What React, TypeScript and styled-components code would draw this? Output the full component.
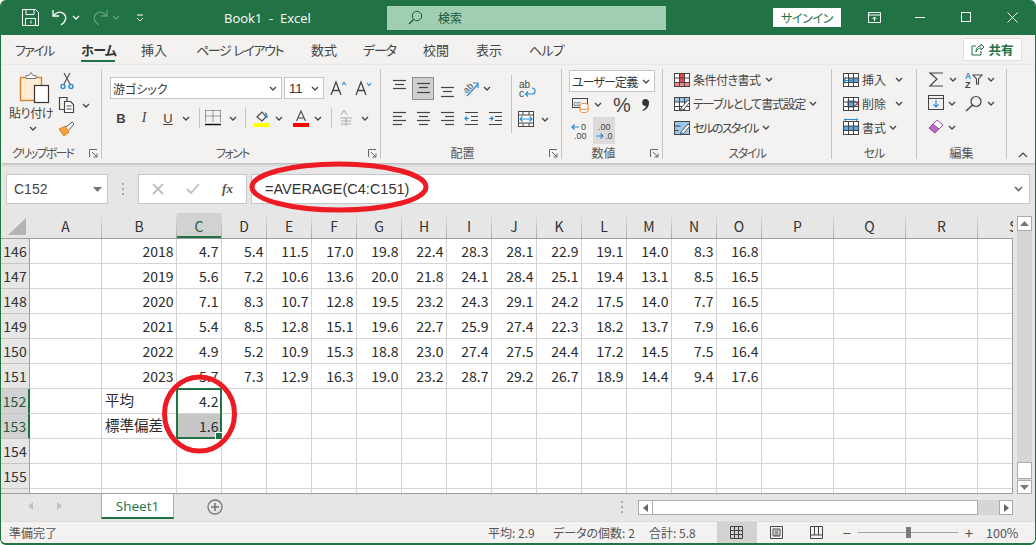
import { ReactNode } from "react";
import styled, { createGlobalStyle } from "styled-components";

const GREEN = "#217346";
const INK = "#444";
const BLUE = "#2a8dd4";
const COLS = "29px 72px 75px repeat(13, 45px) 72px 72px 72px 72px";

const years = [
  ["2018", "4.7", "5.4", "11.5", "17.0", "19.8", "22.4", "28.3", "28.1", "22.9", "19.1", "14.0", "8.3", "16.8"],
  ["2019", "5.6", "7.2", "10.6", "13.6", "20.0", "21.8", "24.1", "28.4", "25.1", "19.4", "13.1", "8.5", "16.5"],
  ["2020", "7.1", "8.3", "10.7", "12.8", "19.5", "23.2", "24.3", "29.1", "24.2", "17.5", "14.0", "7.7", "16.5"],
  ["2021", "5.4", "8.5", "12.8", "15.1", "19.6", "22.7", "25.9", "27.4", "22.3", "18.2", "13.7", "7.9", "16.6"],
  ["2022", "4.9", "5.2", "10.9", "15.3", "18.8", "23.0", "27.4", "27.5", "24.4", "17.2", "14.5", "7.5", "16.4"],
  ["2023", "5.7", "7.3", "12.9", "16.3", "19.0", "23.2", "28.7", "29.2", "26.7", "18.9", "14.4", "9.4", "17.6"],
];
const colNames = "ABCDEFGHIJKLMNOPQRS".split("");

const Global = createGlobalStyle`
  html, body { margin: 0; padding: 0; background: #fff; }
  * { box-sizing: border-box; }
`;

const Window = styled.div`
  position: relative;
  width: 1036px;
  height: 545px;
  display: flex;
  flex-direction: column;
  overflow: hidden;
  background: #e6e6e6;
  border: solid ${GREEN};
  border-width: 0 1px 2px 1px;
  border-radius: 6px;
  font-family: "Noto Sans CJK JP", "Liberation Sans", sans-serif;
  font-feature-settings: "palt";
  color: ${INK};
`;

/* title bar */
const TitleBar = styled.div`
  height: 35px;
  flex: none;
  margin: 0 -1px;
  background: ${GREEN};
  display: flex;
  align-items: center;
  color: #fff;
  padding-left: 22px;
`;
const QatItem = styled.div<{ $w: number }>`
  width: ${(p) => p.$w}px;
  flex: none;
  display: flex;
  align-items: center;
`;
const BookTitle = styled.div`
  width: 163px;
  flex: none;
  font-size: 13px;
  font-family: "Open Sans", sans-serif;
  white-space: pre;
`;
const SearchBox = styled.div`
  width: 279px;
  height: 24px;
  flex: none;
  background: #a0ceb3;
  color: #17583a;
  font-size: 12px;
  display: flex;
  align-items: center;
  gap: 15px;
  padding-left: 21px;
  margin-right: 107px;
`;
const SignIn = styled.div`
  width: 68px;
  height: 19px;
  flex: none;
  background: #fff;
  color: ${GREEN};
  font-size: 12px;
  letter-spacing: -0.4px;
  display: flex;
  align-items: center;
  justify-content: center;
  margin-right: 10px;
`;
const WinButton = styled.div`
  width: 46px;
  flex: none;
  display: flex;
  justify-content: center;
`;

/* tabs */
const TabRow = styled.div`
  height: 30px;
  flex: none;
  background: #f3f2f1;
  display: flex;
  align-items: center;
  padding: 0 0 1px 14px;
  font-size: 13px;
`;
const Tab = styled.div<{ $w: number; $active?: boolean; $ls?: number }>`
  position: relative;
  width: ${(p) => p.$w}px;
  flex: none;
  white-space: pre;
  letter-spacing: ${(p) => p.$ls ?? 0}px;
  font-weight: ${(p) => (p.$active ? 700 : 400)};
  color: ${(p) => (p.$active ? "#333" : INK)};
  ${(p) =>
    p.$active &&
    `&::after { content: ""; position: absolute; left: 0; top: 20px; width: 34px; height: 2px; background: ${GREEN}; }`}
`;
const ShareButton = styled.div`
  margin-left: auto;
  margin-right: 13px;
  width: 59px;
  height: 23px;
  background: #fff;
  border: 1px solid #e1dfdd;
  border-radius: 2px;
  display: flex;
  align-items: center;
  justify-content: center;
  gap: 4px;
  color: ${GREEN};
  font-weight: 700;
  font-size: 12.5px;
`;

/* ribbon */
const Ribbon = styled.div`
  position: relative;
  z-index: 1;
  height: 98px;
  flex: none;
  background: #f3f2f1;
  display: flex;
  box-shadow: 0 1px 3px rgba(0, 0, 0, 0.25);
`;
const Group = styled.div<{ $w: number }>`
  position: relative;
  width: ${(p) => p.$w}px;
  flex: none;
  height: 90px;
  margin-top: 4px;
  border-right: 1px solid #c8c6c4;
  display: flex;
  flex-direction: column;
`;
const GroupBody = styled.div`
  flex: 1;
  min-height: 0;
  display: flex;
`;
const GroupLabel = styled.div<{ $launch?: boolean; $ls?: number }>`
  height: 14px;
  flex: none;
  text-align: center;
  font-size: 12px;
  line-height: 16px;
  color: #555;
  white-space: nowrap;
  letter-spacing: ${(p) => p.$ls ?? 0}px;
  padding-right: ${(p) => (p.$launch ? 17 : 0)}px;
`;
const Launcher = styled.div`
  position: absolute;
  right: 3px;
  bottom: 1px;
  line-height: 0;
`;
const Stack = styled.div<{ $gap?: number; $pad?: string; $w?: number; $mt?: number }>`
  display: flex;
  flex-direction: column;
  gap: ${(p) => p.$gap ?? 0}px;
  padding: ${(p) => p.$pad ?? 0};
  margin-top: ${(p) => p.$mt ?? 0}px;
  ${(p) => p.$w && `width: ${p.$w}px; flex: none;`}
`;
const Line = styled.div<{ $h?: number; $pad?: string }>`
  height: ${(p) => p.$h ?? 24}px;
  flex: none;
  display: flex;
  align-items: center;
  padding: ${(p) => p.$pad ?? 0};
  font-size: 12px;
  white-space: nowrap;
`;
const Txt = styled.span<{ $ls?: number }>`
  letter-spacing: ${(p) => p.$ls ?? 0}px;
`;
const Slot = styled.div<{ $w: number; $on?: boolean; $soft?: boolean }>`
  width: ${(p) => p.$w}px;
  flex: none;
  align-self: stretch;
  display: flex;
  align-items: center;
  justify-content: center;
  ${(p) => p.$on && "background: #d0cfce; border: 1px solid #8f8e8d;"}
  ${(p) => p.$soft && "background: #dcdbda;"}
`;
const VRule = styled.div<{ $h: number; $mx: number; $mt?: number }>`
  width: 1px;
  height: ${(p) => p.$h}px;
  flex: none;
  margin: ${(p) => p.$mt ?? 0}px ${(p) => p.$mx}px 0;
  background: #c8c6c4;
`;
const Select = styled.div<{ $w: number; $mt?: number }>`
  width: ${(p) => p.$w}px;
  height: 22px;
  flex: none;
  margin-top: ${(p) => p.$mt ?? 0}px;
  background: #fff;
  border: 1px solid #c8c6c4;
  display: flex;
  align-items: center;
  justify-content: space-between;
  padding: 0 4px 0 2px;
  font-size: 12px;
  color: #333;
  white-space: nowrap;
`;
const PasteLabel = styled.div`
  font-size: 12px;
  letter-spacing: -0.4px;
  width: 44px;
  margin-left: 8px;
  text-align: center;
  white-space: nowrap;
  line-height: 16px;
  margin-top: 1px;
`;
const CaretRow = styled.div`
  display: flex;
  padding-left: 28px;
  margin-top: 5px;
`;
const CollapseCaret = styled.div`
  position: absolute;
  right: 7px;
  bottom: 5px;
  line-height: 0;
`;
const BigSign = styled.span`
  font: 20px/20px "Liberation Sans", sans-serif;
`;
const FontSize = styled.span`
  padding-left: 2px;
  font: 13px "Liberation Sans", sans-serif;
`;
const StyleB = styled.b`
  font: 700 13px "Liberation Sans", sans-serif;
`;
const StyleI = styled.i`
  font: italic 14px "Liberation Serif", serif;
`;
const StyleU = styled.u`
  font: 13px "Liberation Sans", sans-serif;
`;

/* formula bar */
const FormulaArea = styled.div`
  height: 50px;
  flex: none;
  display: flex;
  align-items: flex-start;
  padding: 11px 5px 0 5px;
`;
const NameBox = styled.div`
  width: 102px;
  height: 30px;
  flex: none;
  background: #fff;
  border: 1px solid #c6c6c6;
  display: flex;
  align-items: center;
  justify-content: space-between;
  padding: 0 5px 0 7px;
  font: 14px "Liberation Sans", sans-serif;
`;
const Grip = styled.div`
  width: 30px;
  height: 30px;
  flex: none;
  display: flex;
  align-items: center;
  justify-content: center;
`;
const FxBox = styled.div`
  width: 109px;
  height: 30px;
  flex: none;
  background: #fff;
  border: 1px solid #c6c6c6;
  display: flex;
  align-items: center;
  justify-content: space-around;
  padding: 0 2px;
  margin-right: 4px;
`;
const FxGlyph = styled.span`
  font: italic 700 13px "Liberation Serif", serif;
  color: #555;
`;
const FormulaInput = styled.div`
  flex: 1;
  height: 30px;
  background: #fff;
  border: 1px solid #c6c6c6;
  display: flex;
  align-items: center;
  justify-content: space-between;
  padding: 0 6px 0 13px;
  font: 14.5px "Liberation Sans", sans-serif;
  color: #333;
`;

/* sheet */
const SheetArea = styled.div`
  flex: 1;
  min-height: 0;
  display: flex;
`;
const Sheet = styled.div`
  width: 1012px;
  flex: none;
  display: flex;
  flex-direction: column;
  overflow: hidden;
`;
const HeadRow = styled.div`
  height: 26px;
  flex: none;
  display: grid;
  grid-template-columns: ${COLS};
  border-bottom: 1px solid #9e9e9e;
`;
const Corner = styled.div`
  border-right: 1px solid transparent;
  display: flex;
  align-items: flex-end;
  justify-content: flex-end;
  padding: 0 3px 3px 0;
`;
const ColHead = styled.div<{ $sel?: boolean }>`
  position: relative;
  display: flex;
  align-items: center;
  justify-content: center;
  font-size: 14px;
  color: #333;
  overflow: hidden;
  background: ${(p) => (p.$sel ? "#d2d2d2" : "transparent")};
  border-right: 1px solid transparent;
  border-image: linear-gradient(#e6e6e6, #a8a8a8) 1;
  ${(p) => p.$sel && `box-shadow: inset 0 -2px 0 ${GREEN}; color: #2a5a40;`}
`;
const SheetBody = styled.div`
  position: relative;
  flex: 1;
  min-height: 0;
  overflow: hidden;
  background: #fff;
  border-bottom: 1px solid #9e9e9e;
  &::after {
    content: "";
    position: absolute;
    right: 0;
    top: 0;
    bottom: 0;
    width: 1px;
    background: #9e9e9e;
  }
`;
const Row = styled.div`
  height: 25px;
  display: grid;
  grid-template-columns: ${COLS};
`;
const RowHead = styled.div<{ $sel?: boolean }>`
  background: ${(p) => (p.$sel ? "#d2d2d2" : "#e6e6e6")};
  border-right: ${(p) => (p.$sel ? `2px solid ${GREEN}` : "1px solid #9e9e9e")};
  border-bottom: 1px solid #c4c4c4;
  display: flex;
  align-items: center;
  justify-content: center;
  font-size: 14px;
  color: ${(p) => (p.$sel ? "#2a5a40" : "#333")};
`;
const Cell = styled.div<{ $left?: boolean; $fill?: boolean }>`
  border-right: 1px solid #d4d4d4;
  border-bottom: 1px solid #d4d4d4;
  display: flex;
  align-items: center;
  justify-content: ${(p) => (p.$left ? "flex-start" : "flex-end")};
  padding: ${(p) => (p.$left ? "0 2px 3px 3px" : "0 2.5px 0 0")};
  font-size: ${(p) => (p.$left ? 14.5 : 14)}px;
  font-feature-settings: normal;
  color: #2b2b2b;
  white-space: nowrap;
  background: ${(p) => (p.$fill ? "#c6c6c6" : "transparent")};
`;
const Selection = styled.div`
  position: absolute;
  left: 175px;
  top: 149px;
  width: 46px;
  height: 51px;
  border: 2px solid ${GREEN};
  &::after {
    content: "";
    position: absolute;
    right: -3px;
    bottom: -3px;
    width: 6px;
    height: 6px;
    background: ${GREEN};
    border: 1px solid #fff;
  }
`;

/* vertical scrollbar */
const VScroll = styled.div`
  flex: 1;
  display: flex;
  flex-direction: column;
  padding: 3px 3px 0 4px;
`;
const VTrack = styled.div`
  flex: 1;
  width: 15px;
  background: #d6d6d6;
  display: flex;
  flex-direction: column;
`;
const ScrollBtn = styled.div<{ $w?: number; $h?: number }>`
  width: ${(p) => p.$w ?? 15}px;
  height: ${(p) => p.$h ?? 15}px;
  flex: none;
  background: #fff;
  border: 1px solid #ababab;
  display: flex;
  align-items: center;
  justify-content: center;
`;
const VThumb = styled.div`
  height: 17px;
  flex: none;
  margin-top: auto;
  margin-bottom: 1px;
  background: #fff;
  border: 1px solid #ababab;
`;

/* sheet tabs */
const TabBar = styled.div`
  height: 27px;
  flex: none;
  display: flex;
  align-items: flex-start;
  font-size: 13.5px;
`;
const SheetNav = styled.div`
  width: 100px;
  height: 24px;
  flex: none;
  display: flex;
  align-items: center;
  gap: 24px;
  padding-left: 27px;
`;
const SheetTab = styled.div`
  width: 73px;
  height: 25px;
  flex: none;
  background: #fff;
  border: 1px solid #ababab;
  border-top: none;
  border-bottom: 2px solid ${GREEN};
  color: ${GREEN};
  display: flex;
  align-items: center;
  justify-content: center;
  font-family: "Open Sans", sans-serif;
`;
const AddSheet = styled.div`
  width: 464px;
  height: 26px;
  flex: none;
  padding-left: 33px;
  display: flex;
  align-items: center;
  justify-content: space-between;
  padding-right: 14px;
`;
const HScroll = styled.div`
  width: 375px;
  height: 15px;
  flex: none;
  margin-top: 6px;
  background: #d6d6d6;
  display: flex;
`;
const HThumb = styled.div`
  width: 325px;
  flex: none;
  background: #fff;
  border: 1px solid #ababab;
  border-left: none;
`;

/* status bar */
const StatusBar = styled.div`
  height: 22px;
  flex: none;
  background: #f3f2f1;
  border-top: 1px solid #dcdcdc;
  display: flex;
  align-items: center;
  font-size: 12px;
  color: #555;
  padding-left: 8px;
`;
const StatusText = styled.div<{ $w: number }>`
  width: ${(p) => p.$w}px;
  flex: none;
  white-space: nowrap;
`;
const ViewBtn = styled.div<{ $on?: boolean }>`
  width: 40px;
  height: 100%;
  flex: none;
  background: ${(p) => (p.$on ? "#d2d2d2" : "transparent")};
  display: flex;
  align-items: center;
  justify-content: center;
`;
const ZoomSlider = styled.div`
  position: relative;
  width: 100px;
  height: 1px;
  flex: none;
  margin: 0 5px;
  background: #a6a6a6;
  &::after {
    content: "";
    position: absolute;
    left: 48px;
    top: -5px;
    width: 5px;
    height: 11px;
    background: #7a7a7a;
  }
`;
const ZoomSign = styled.div`
  width: 12px;
  flex: none;
  text-align: center;
  font-size: 15px;
  line-height: 15px;
`;
const ZoomValue = styled.div`
  margin-left: 11px;
  font-size: 12.5px;
`;

const Marks = styled.svg`
  position: absolute;
  left: -1px;
  top: 0;
  z-index: 5;
  pointer-events: none;
`;

const Gap = styled.div<{ $w: number }>`
  width: ${(p) => p.$w}px;
  flex: none;
`;

function Ico(props: { w: number; h: number; children: ReactNode; stroke?: string }) {
  const { w, h, children, stroke = INK } = props;
  return (
    <svg width={w} height={h} viewBox={`0 0 ${w} ${h}`} fill="none" stroke={stroke} strokeWidth={1} style={{ display: "block", flex: "none", overflow: "visible" }}>
      {children}
    </svg>
  );
}

function Caret({ color = INK }: { color?: string }) {
  return (
    <Ico w={8} h={5} stroke={color}>
      <path d="M1 1l3 3 3-3" strokeWidth={1.3} />
    </Ico>
  );
}

function Launch() {
  return (
    <Ico w={9} h={9} stroke="#666">
      <path d="M.5 8V.5H8M3 3l5 5M8 4.5V8H4.5" />
    </Ico>
  );
}

function Lines({ ys, xs }: { ys: number[]; xs: [number, number][] }) {
  return (
    <Ico w={15} h={18}>
      {ys.map((y, i) => (
        <path key={y} d={`M${xs[i][0]} ${y + 0.5}H${xs[i][1]}`} strokeWidth={1.2} />
      ))}
    </Ico>
  );
}

function GridIco({ children }: { children?: ReactNode }) {
  return (
    <Ico w={17} h={17}>
      <rect x=".5" y="2.5" width="15" height="13" fill="#fff" />
      {children}
      <path d="M.5 2.5h15v13H.5zM.5 7h15M.5 11.5h15M5.5 2.5v13M10.5 2.5v13" />
    </Ico>
  );
}

// the little brush laid over the table and cell style grids
function Brush() {
  return (
    <g>
      <path d="M6 16l1-3 7-8 2 2-7 8z" fill="#fff" stroke="#555" />
      <path d="M6.5 15.5L8 13l1 1.500z" fill="#2a6fa8" stroke="none" />
    </g>
  );
}

function RibbonBar() {
  return (
    <Ribbon>
      <Group $w={101}>
        <GroupBody>
          <Stack $w={57} $pad="3px 0 0 0">
            <Ico w={52} h={32}>
              <rect x="19.5" y="5.5" width="21" height="23" fill="#fdeccf" stroke="#d9822b" strokeWidth={1.4} />
              <path d="M25 6.5h10V3.5h-3L30 .5 28 3.5h-3z" fill="#fff" stroke="#777" />
              <rect x="33.5" y="13.5" width="14" height="17" fill="#fff" stroke="#333" strokeWidth={1.2} />
            </Ico>
            <PasteLabel>貼り付け</PasteLabel>
            <CaretRow><Caret /></CaretRow>
          </Stack>
          <Stack>
            <Line>
              <Ico w={18} h={18}>
                <path d="M6 1l6 11M12 1L6 12" stroke="#555" strokeWidth={1.2} />
                <circle cx="5" cy="14.5" r="2" stroke={BLUE} strokeWidth={1.4} />
                <circle cx="13" cy="14.5" r="2" stroke={BLUE} strokeWidth={1.4} />
              </Ico>
            </Line>
            <Line>
              <Ico w={18} h={18}>
                <path d="M6 13.5H1.5V1.5H9V5" strokeWidth={1.2} />
                <path d="M6.5 5.5h6l3 3v8h-9zM8.5 10h5M8.5 13h5" fill="#fff" strokeWidth={1.2} />
              </Ico>
              <Gap $w={6} />
              <Caret />
            </Line>
            <Line>
              <Ico w={18} h={18}>
                <path d="M1 9l5 7 5-4-3-6z" fill="#f2a33c" stroke="#d9822b" />
                <path d="M8 7l6-5 2 2-5 6" fill="#fff" stroke="#555" />
              </Ico>
            </Line>
          </Stack>
        </GroupBody>
        <GroupLabel $launch $ls={-1.8}>クリップボード</GroupLabel>
        <Launcher><Launch /></Launcher>
      </Group>

      <Group $w={279}>
        <GroupBody>
          <Stack $gap={5} $pad="8px 0 0 8px">
            <Line $h={22}>
              <Select $w={172}>游ゴシック<Caret /></Select>
              <Gap $w={2} />
              <Select $w={40}><FontSize>11</FontSize><Caret /></Select>
              <Gap $w={6} />
              <Ico w={17} h={16}>
                <path d="M1 15L6 2l5 13M3 10.5h6" strokeWidth={1.3} />
                <path d="M12 5l2-2.5L16 5" stroke={BLUE} strokeWidth={1.2} />
              </Ico>
              <Gap $w={8} />
              <Ico w={17} h={16}>
                <path d="M1 15L6 2l5 13M3 10.5h6" strokeWidth={1.3} />
                <path d="M12 3l2 2.5L16 3" stroke={BLUE} strokeWidth={1.2} />
              </Ico>
            </Line>
            <Line $h={28}>
              <Gap $w={2} />
              <Slot $w={18}><StyleB>B</StyleB></Slot>
              <Gap $w={5} />
              <Slot $w={18}><StyleI>I</StyleI></Slot>
              <Gap $w={6} />
              <Slot $w={18}><StyleU>U</StyleU></Slot>
              <Slot $w={18}><Caret /></Slot>
              <VRule $h={20} $mx={4} />
              <Slot $w={18}>
                <Ico w={16} h={16}>
                  <path d="M.5.5h15M.5.5v11M15.5.5v11M.5 6h15M8 .5v11" strokeDasharray="1 1" />
                  <path d="M0 14.5h16" stroke="#111" strokeWidth={1.4} />
                </Ico>
              </Slot>
              <Slot $w={22}><Caret /></Slot>
              <VRule $h={20} $mx={1} />
              <Gap $w={6} />
              <Slot $w={18}>
                <Ico w={17} h={17}>
                  <path d="M3 7l5-5 4 5-4 4z" strokeWidth={1.1} />
                  <path d="M11 3c2 1 2 3 2 5" stroke={BLUE} strokeWidth={1.4} />
                  <rect x="0" y="13" width="16" height="4" fill="#ffff00" stroke="none" />
                </Ico>
              </Slot>
              <Slot $w={16}><Caret /></Slot>
              <Gap $w={5} />
              <Slot $w={18}>
                <Ico w={17} h={17}>
                  <path d="M3.5 11L8 1l4.5 10M5 8h6" strokeWidth={1.1} />
                  <rect x="0" y="13" width="16" height="4" fill="#ff0000" stroke="none" />
                </Ico>
              </Slot>
              <Slot $w={16}><Caret /></Slot>
              <VRule $h={20} $mx={5} />
              <Slot $w={18}>
                <Ico w={14} h={18} stroke="#aaa">
                  <path d="M2 6l3-5 3 5M1 9h12M2 12h10M7 9v8M2 15h10" />
                </Ico>
              </Slot>
              <Gap $w={2} />
              <Slot $w={16}><Caret /></Slot>
            </Line>
          </Stack>
        </GroupBody>
        <GroupLabel $launch $ls={-1.5}>フォント</GroupLabel>
        <Launcher><Launch /></Launcher>
      </Group>

      <Group $w={181}>
        <GroupBody>
          <Stack $gap={6} $pad="8px 0 0 6px" $w={130}>
            <Line $h={23}>
              <Slot $w={24}><Lines ys={[0, 4, 8]} xs={[[1, 14], [3, 12], [1, 14]]} /></Slot>
              <Gap $w={1} />
              <Slot $w={22} $on><Lines ys={[3, 7, 12]} xs={[[1, 14], [3, 12], [1, 14]]} /></Slot>
              <Gap $w={1} />
              <Slot $w={24}><Lines ys={[7, 11, 16]} xs={[[1, 14], [3, 12], [1, 14]]} /></Slot>
              <Slot $w={24}>
                <Ico w={18} h={18}>
                  <text x="1" y="11" fontSize="9" fill={INK} stroke="none" transform="rotate(-45 6 8)" fontFamily="Liberation Sans">ab</text>
                  <path d="M5 16L16 4M11 3h5v5" stroke={BLUE} strokeWidth={1.2} />
                </Ico>
              </Slot>
              <Slot $w={8}><Caret /></Slot>
            </Line>
            <Line $h={24}>
              <Slot $w={24}><Lines ys={[3, 7, 11, 15]} xs={[[1, 14], [1, 10], [1, 14], [1, 10]]} /></Slot>
              <Slot $w={24}><Lines ys={[3, 7, 11, 15]} xs={[[1, 14], [3, 12], [1, 14], [3, 12]]} /></Slot>
              <Slot $w={24}><Lines ys={[3, 7, 11, 15]} xs={[[1, 14], [5, 14], [1, 14], [5, 14]]} /></Slot>
              <Slot $w={24}>
                <Ico w={15} h={18}>
                  <path d="M1 3.5h13M7 7.5h7M7 11.5h7M1 15.5h13" strokeWidth={1.1} />
                  <path d="M5 9.5H1M3 7.5l-2 2 2 2" stroke={BLUE} strokeWidth={1.2} />
                </Ico>
              </Slot>
              <Slot $w={24}>
                <Ico w={15} h={18}>
                  <path d="M1 3.5h13M7 7.5h7M7 11.5h7M1 15.5h13" strokeWidth={1.1} />
                  <path d="M1 9.5h4M3 7.5l2 2-2 2" stroke={BLUE} strokeWidth={1.2} />
                </Ico>
              </Slot>
            </Line>
          </Stack>
          <VRule $h={58} $mx={0} $mt={6} />
          <Stack $gap={7} $pad="8px 0 0 6px">
            <Line $h={23}>
              <Ico w={19} h={20}>
                <text x="1" y="9" fontSize="10" fill={INK} stroke="none" fontFamily="Liberation Sans">ab</text>
                <text x="1" y="18" fontSize="10" fill={INK} stroke="none" fontFamily="Liberation Sans">c</text>
                <path d="M14 9c4 0 4 6 0 6H8M10 12.5l-2.5 2.5 2.5 2.5" stroke={BLUE} strokeWidth={1.2} />
              </Ico>
            </Line>
            <Line $h={24}>
              <Ico w={16} h={16}>
                <rect x=".5" y=".5" width="15" height="15" fill="#fff" />
                <path d="M.5 4h15M.5 12h15M5 .5V4M11 .5V4M5 12v3.5M11 12v3.5" />
                <path d="M2 8h12M4.5 5.5L2 8l2.5 2.5M11.5 5.5L14 8l-2.5 2.5" stroke={BLUE} strokeWidth={1.2} />
              </Ico>
              <Gap $w={7} />
              <Caret />
            </Line>
          </Stack>
        </GroupBody>
        <GroupLabel $launch>配置</GroupLabel>
        <Launcher><Launch /></Launcher>
      </Group>

      <Group $w={101}>
        <GroupBody>
          <Stack $pad="0 0 0 7px">
            <Select $w={86} $mt={1}><Txt $ls={-0.9}>ユーザー定義</Txt><Caret /></Select>
            <Line $h={25} $pad="0 0 0 3px">
              <Ico w={17} h={17}>
                <rect x=".5" y="2.5" width="15" height="9" />
                <text x="1.5" y="10" fontSize="7" fill={INK} stroke="none" fontFamily="Liberation Sans">cc</text>
                <path d="M8 9v6c0 2 8 2 8 0V9c0-2-8-2-8 0zM8 12c0 2 8 2 8 0" fill="#fff" stroke="#e8862a" />
              </Ico>
              <Gap $w={5} />
              <Caret />
              <Gap $w={11} />
              <BigSign>%</BigSign>
              <Gap $w={10} />
              <Ico w={9} h={14} stroke="none">
                <path d="M4.5 1a3.5 3.5 0 0 1 3.5 4c0 4-3 7-6 8l-.6-.9C3.4 11 4.8 9.5 5 8a3.5 3.5 0 0 1-.5-7z" fill="#333" />
              </Ico>
            </Line>
            <Line $h={27} $pad="0 0 0 2px">
              <Slot $w={18}>
                <Ico w={18} h={18}>
                  <path d="M1 5h7M3.5 2.5L1 5l2.5 2.5" stroke={BLUE} strokeWidth={1.2} />
                  <text x="10" y="8" fontSize="9" fill={INK} stroke="none" fontFamily="Liberation Sans">0</text>
                  <text x="3" y="17" fontSize="9" fill={INK} stroke="none" fontFamily="Liberation Sans">.00</text>
                </Ico>
              </Slot>
              <Gap $w={4} />
              <Slot $w={22} $soft>
                <Ico w={18} h={18}>
                  <text x="3" y="8" fontSize="9" fill={INK} stroke="none" fontFamily="Liberation Sans">.00</text>
                  <path d="M1 14h7M5.5 11.5L8 14l-2.5 2.5" stroke={BLUE} strokeWidth={1.2} />
                  <text x="10" y="17" fontSize="9" fill={INK} stroke="none" fontFamily="Liberation Sans">.0</text>
                </Ico>
              </Slot>
            </Line>
          </Stack>
        </GroupBody>
        <GroupLabel $launch>数値</GroupLabel>
        <Launcher><Launch /></Launcher>
      </Group>

      <Group $w={169}>
        <GroupBody>
          <Stack $pad="0 0 0 11px" $mt={-2}>
            <Line>
              <GridIco>
                <rect x="6" y="3" width="4" height="9" fill="#e8474c" stroke="none" />
                <rect x="1" y="12" width="14" height="3" fill="#f2888b" stroke="none" />
              </GridIco>
              <Gap $w={2} /><Txt $ls={-0.5}>条件付き書式</Txt><Gap $w={4} /><Caret />
            </Line>
            <Line>
              <Ico w={17} h={17}>
                <rect x=".5" y="2.5" width="15" height="13" fill="#fff" />
                <rect x="1" y="3" width="14" height="4" fill="#9cc7ea" stroke="none" />
                <path d="M.5 2.5h15v13H.5zM.5 7h15M.5 11.5h15M5.5 2.5v13M10.5 2.5v13" />
                <Brush />
              </Ico>
              <Gap $w={2} /><Txt $ls={-1}>テーブルとして書式設定</Txt><Gap $w={4} /><Caret />
            </Line>
            <Line>
              <Ico w={17} h={17}>
                <rect x=".5" y="2.5" width="15" height="13" fill="#9cc7ea" stroke={INK} />
                <path d="M.5 7h6M.5 11.5h4" />
                <Brush />
              </Ico>
              <Gap $w={2} /><Txt $ls={-1.8}>セルのスタイル</Txt><Gap $w={4} /><Caret />
            </Line>
          </Stack>
        </GroupBody>
        <GroupLabel $ls={-1.5}>スタイル</GroupLabel>
      </Group>

      <Group $w={85}>
        <GroupBody>
          <Stack $pad="0 0 0 11px" $mt={-2}>
            <Line>
              <GridIco>
                <rect x="5" y="7" width="10" height="4.5" fill="#5aa7e0" stroke="none" />
                <path d="M9 9.5H1M3 7L.5 9.5 3 12" stroke={BLUE} strokeWidth={1.2} />
              </GridIco>
              <Gap $w={2} />挿入<Gap $w={9} /><Caret />
            </Line>
            <Line>
              <GridIco>
                <rect x="5" y="6" width="6" height="6" fill="#5aa7e0" stroke="#2a6fa8" />
                <path d="M12 6l4 5M16 6l-4 5" stroke="#e8474c" strokeWidth={1.3} />
              </GridIco>
              <Gap $w={2} />削除<Gap $w={9} /><Caret />
            </Line>
            <Line>
              <GridIco>
                <rect x="1" y="7" width="14" height="5" fill="#5aa7e0" stroke="none" />
                <path d="M1 .5h14M3 0L1 .5l2 1M13 0l2 .5-2 1" stroke={BLUE} />
              </GridIco>
              <Gap $w={2} />書式<Gap $w={3} /><Caret />
            </Line>
          </Stack>
        </GroupBody>
        <GroupLabel $ls={-1}>セル</GroupLabel>
      </Group>

      <Group $w={90}>
        <GroupBody>
          <Stack $pad="0 0 0 11px" $w={44} $mt={-2}>
            <Line>
              <Ico w={17} h={16}>
                <path d="M15 2H2l7 6-7 7h13" strokeWidth={1.2} />
              </Ico>
              <Gap $w={4} /><Caret />
            </Line>
            <Line>
              <Ico w={17} h={16}>
                <rect x=".5" y=".5" width="15" height="14" />
                <path d="M.5 3.5h15" />
                <path d="M8 5v7M5.5 9.5L8 12l2.5-2.5" stroke={BLUE} strokeWidth={1.2} />
              </Ico>
              <Gap $w={3} /><Caret />
            </Line>
            <Line>
              <Ico w={17} h={16}>
                <path d="M1 9l8-8 6 5-8 8z" fill="#fff" stroke="#9c4ea8" />
                <path d="M1 9l4-4 6 5-4 4z" fill="#b16cc0" stroke="#9c4ea8" />
              </Ico>
              <Gap $w={3} /><Caret />
            </Line>
          </Stack>
          <Stack $pad="0 0 0 4px" $mt={-2}>
            <Line>
              <Ico w={18} h={17}>
                <text x="0" y="7.5" fontSize="8.5" fontWeight="700" fill={BLUE} stroke="none" fontFamily="Liberation Sans">A</text>
                <text x="0" y="16.5" fontSize="9" fontWeight="700" fill={INK} stroke="none" fontFamily="Liberation Sans">Z</text>
                <path d="M8 4h9l-3.5 4v5h-2V8z" strokeWidth={1.1} />
              </Ico>
              <Gap $w={4} /><Caret />
            </Line>
            <Line>
              <Ico w={18} h={17}>
                <circle cx="11" cy="6.5" r="5" strokeWidth={1.2} />
                <path d="M7.5 10L1 16" strokeWidth={1.4} />
              </Ico>
              <Gap $w={4} /><Caret />
            </Line>
          </Stack>
        </GroupBody>
        <GroupLabel>編集</GroupLabel>
      </Group>

      <CollapseCaret>
        <Ico w={10} h={6}>
          <path d="M1 5l4-4 4 4" strokeWidth={1.2} />
        </Ico>
      </CollapseCaret>
    </Ribbon>
  );
}

export default function App() {
  return (
    <>
      <Global />
      <Window>
        <TitleBar>
          <QatItem $w={30}>
            <Ico w={17} h={17} stroke="#fff">
              <path d="M.5.5h13l3 3v13H.5zM4 .5v5h8v-5M3.5 16.5v-7h10v7M9 11.5v3" strokeWidth={1} />
            </Ico>
          </QatItem>
          <QatItem $w={40}>
            <Ico w={16} h={17} stroke="#fff">
              <path d="M1 1v6h6M1.5 6.5C4 3 9 2 12 5c3 3 2 8-3 11" strokeWidth={1.3} />
            </Ico>
            <Gap $w={4} />
            <Caret color="#fff" />
          </QatItem>
          <QatItem $w={44}>
            <Ico w={16} h={17} stroke="#5f9c7c">
              <path d="M15 1v6H9M14.5 6.5C12 3 7 2 4 5c-3 3-2 8 3 11" strokeWidth={1.3} />
            </Ico>
            <Gap $w={4} />
            <Caret color="#5f9c7c" />
          </QatItem>
          <QatItem $w={88}>
            <Ico w={8} h={8} stroke="#fff">
              <path d="M1 1h6M1 4l3 3 3-3" />
            </Ico>
          </QatItem>
          <BookTitle>Book1  -  Excel</BookTitle>
          <SearchBox>
            <Ico w={15} h={15} stroke="#17583a">
              <circle cx="9" cy="6" r="4.7" />
              <path d="M5.5 9.5L1 14" strokeWidth={1.2} />
            </Ico>
            検索
          </SearchBox>
          <SignIn>サインイン</SignIn>
          <WinButton>
            <Ico w={13} h={11} stroke="#fff">
              <path d="M.5.5h12v10H.5zM.5 3h12M6.5 9V5M4.5 7l2-2 2 2" />
            </Ico>
          </WinButton>
          <WinButton>
            <Ico w={11} h={11} stroke="#fff"><path d="M0 5.5h10" /></Ico>
          </WinButton>
          <WinButton>
            <Ico w={11} h={11} stroke="#fff"><rect x=".5" y=".5" width="9" height="9" /></Ico>
          </WinButton>
          <WinButton>
            <Ico w={11} h={11} stroke="#fff"><path d="M.5.5l10 10M10.5.5l-10 10" /></Ico>
          </WinButton>
        </TitleBar>

        <TabRow>
          <Tab $w={66} $ls={-1.6}>ファイル</Tab>
          <Tab $w={60} $active $ls={-0.6}>ホーム</Tab>
          <Tab $w={55}>挿入</Tab>
          <Tab $w={115} $ls={-1.4}>ページ  レイアウト</Tab>
          <Tab $w={52}>数式</Tab>
          <Tab $w={60} $ls={-1.2}>データ</Tab>
          <Tab $w={53}>校閲</Tab>
          <Tab $w={53}>表示</Tab>
          <Tab $w={50} $ls={-0.8}>ヘルプ</Tab>
          <ShareButton>
            <Ico w={13} h={13} stroke={GREEN}>
              <path d="M5 3H1v9h9V8M5 9c0-4 2-6 5-6V1l3 3-3 3V5C8 5 6 6 5 9z" />
            </Ico>
            共有
          </ShareButton>
        </TabRow>

        <RibbonBar />

        <FormulaArea>
          <NameBox>
            C152
            <svg width="9" height="5" viewBox="0 0 9 5"><path d="M0 0h9L4.5 5z" fill="#777" /></svg>
          </NameBox>
          <Grip>
            <Ico w={3} h={12} stroke="none">
              <rect y="0" width="2" height="2" fill="#aaa" />
              <rect y="5" width="2" height="2" fill="#aaa" />
              <rect y="10" width="2" height="2" fill="#aaa" />
            </Ico>
          </Grip>
          <FxBox>
            <Ico w={12} h={12} stroke="#bdbdbd"><path d="M1 1l10 10M11 1L1 11" strokeWidth={1.8} /></Ico>
            <Ico w={14} h={12} stroke="#bdbdbd"><path d="M1 6l4 4 8-9" strokeWidth={1.8} /></Ico>
            <FxGlyph>fx</FxGlyph>
          </FxBox>
          <FormulaInput>
            =AVERAGE(C4:C151)
            <Ico w={9} h={6} stroke="#666"><path d="M1 1l3.5 3.5L8 1" strokeWidth={1.6} /></Ico>
          </FormulaInput>
        </FormulaArea>

        <SheetArea>
          <Sheet>
            <HeadRow>
              <Corner>
                <svg width="18" height="17" viewBox="0 0 18 17"><path d="M18 0v17H0z" fill="#b4b4b4" /></svg>
              </Corner>
              {colNames.map((c) => (
                <ColHead key={c} $sel={c === "C"}>{c}</ColHead>
              ))}
            </HeadRow>
            <SheetBody>
              {years.map((r, i) => (
                <Row key={r[0]}>
                  <RowHead>{146 + i}</RowHead>
                  <Cell />
                  {r.map((v, j) => (
                    <Cell key={j}>{v}</Cell>
                  ))}
                  <Cell /><Cell /><Cell /><Cell />
                </Row>
              ))}
              {[152, 153, 154, 155, 156].map((n) => (
                <Row key={n}>
                  <RowHead $sel={n < 154}>{n < 156 ? n : ""}</RowHead>
                  <Cell />
                  <Cell $left>{n === 152 ? "平均" : n === 153 ? "標準偏差" : ""}</Cell>
                  <Cell $fill={n === 153}>{n === 152 ? "4.2" : n === 153 ? "1.6" : ""}</Cell>
                  {colNames.slice(3).map((c) => (
                    <Cell key={c} />
                  ))}
                </Row>
              ))}
              <Selection />
            </SheetBody>
          </Sheet>
          <VScroll>
            <VTrack>
              <ScrollBtn>
                <svg width="9" height="5" viewBox="0 0 9 5"><path d="M4.5 0L9 5H0z" fill="#777" /></svg>
              </ScrollBtn>
              <VThumb />
              <ScrollBtn $h={14}>
                <svg width="9" height="5" viewBox="0 0 9 5"><path d="M0 0h9L4.5 5z" fill="#777" /></svg>
              </ScrollBtn>
            </VTrack>
          </VScroll>
        </SheetArea>

        <TabBar>
          <SheetNav>
            <svg width="5" height="8" viewBox="0 0 5 8"><path d="M5 0v8L0 4z" fill="#c0c0c0" /></svg>
            <svg width="5" height="8" viewBox="0 0 5 8"><path d="M0 0v8l5-4z" fill="#c0c0c0" /></svg>
          </SheetNav>
          <SheetTab>Sheet1</SheetTab>
          <AddSheet>
            <Ico w={16} h={16} stroke="#777">
              <circle cx="8" cy="8" r="7" strokeWidth={1.3} />
              <path d="M4 8h8M8 4v8" strokeWidth={1.6} />
            </Ico>
            <Ico w={3} h={12} stroke="none">
              <rect y="0" width="2" height="2" fill="#aaa" />
              <rect y="5" width="2" height="2" fill="#aaa" />
              <rect y="10" width="2" height="2" fill="#aaa" />
            </Ico>
          </AddSheet>
          <HScroll>
            <ScrollBtn $w={15}>
              <svg width="5" height="8" viewBox="0 0 5 8"><path d="M5 0v8L0 4z" fill="#666" /></svg>
            </ScrollBtn>
            <HThumb />
            <Gap $w={21} />
            <ScrollBtn $w={14}>
              <svg width="5" height="8" viewBox="0 0 5 8"><path d="M0 0v8l5-4z" fill="#666" /></svg>
            </ScrollBtn>
          </HScroll>
        </TabBar>

        <StatusBar>
          <StatusText $w={479}>準備完了</StatusText>
          <StatusText $w={65}>平均: 2.9</StatusText>
          <StatusText $w={96}>データの個数: 2</StatusText>
          <StatusText $w={68}>合計: 5.8</StatusText>
          <ViewBtn $on>
            <Ico w={14} h={13} stroke="#444">
              <path d="M.5.5h12v12H.5zM.5 4.5h12M.5 8.5h12M4.5.5v12M8.5.5v12" />
            </Ico>
          </ViewBtn>
          <ViewBtn>
            <Ico w={14} h={13} stroke="#444">
              <path d="M.5.5h12v12H.5zM3 3h7v7H3zM4.5 5h4M4.5 7h4M4.5 9h4" />
            </Ico>
          </ViewBtn>
          <ViewBtn>
            <Ico w={14} h={13} stroke="#444">
              <path d="M.5.5h12v12H.5zM.5 9h12M4.5.5V9M8.5.5V9" />
            </Ico>
          </ViewBtn>
          <Gap $w={4} />
          <ZoomSign>−</ZoomSign>
          <ZoomSlider />
          <ZoomSign>+</ZoomSign>
          <ZoomValue>100%</ZoomValue>
        </StatusBar>

        <Marks width="1036" height="545" viewBox="0 0 1036 545" fill="none" stroke="#ed1c24" strokeWidth={5}>
          <ellipse cx="339" cy="187" rx="87" ry="23" />
          <ellipse cx="199.5" cy="414" rx="35" ry="37" />
        </Marks>
      </Window>
    </>
  );
}
